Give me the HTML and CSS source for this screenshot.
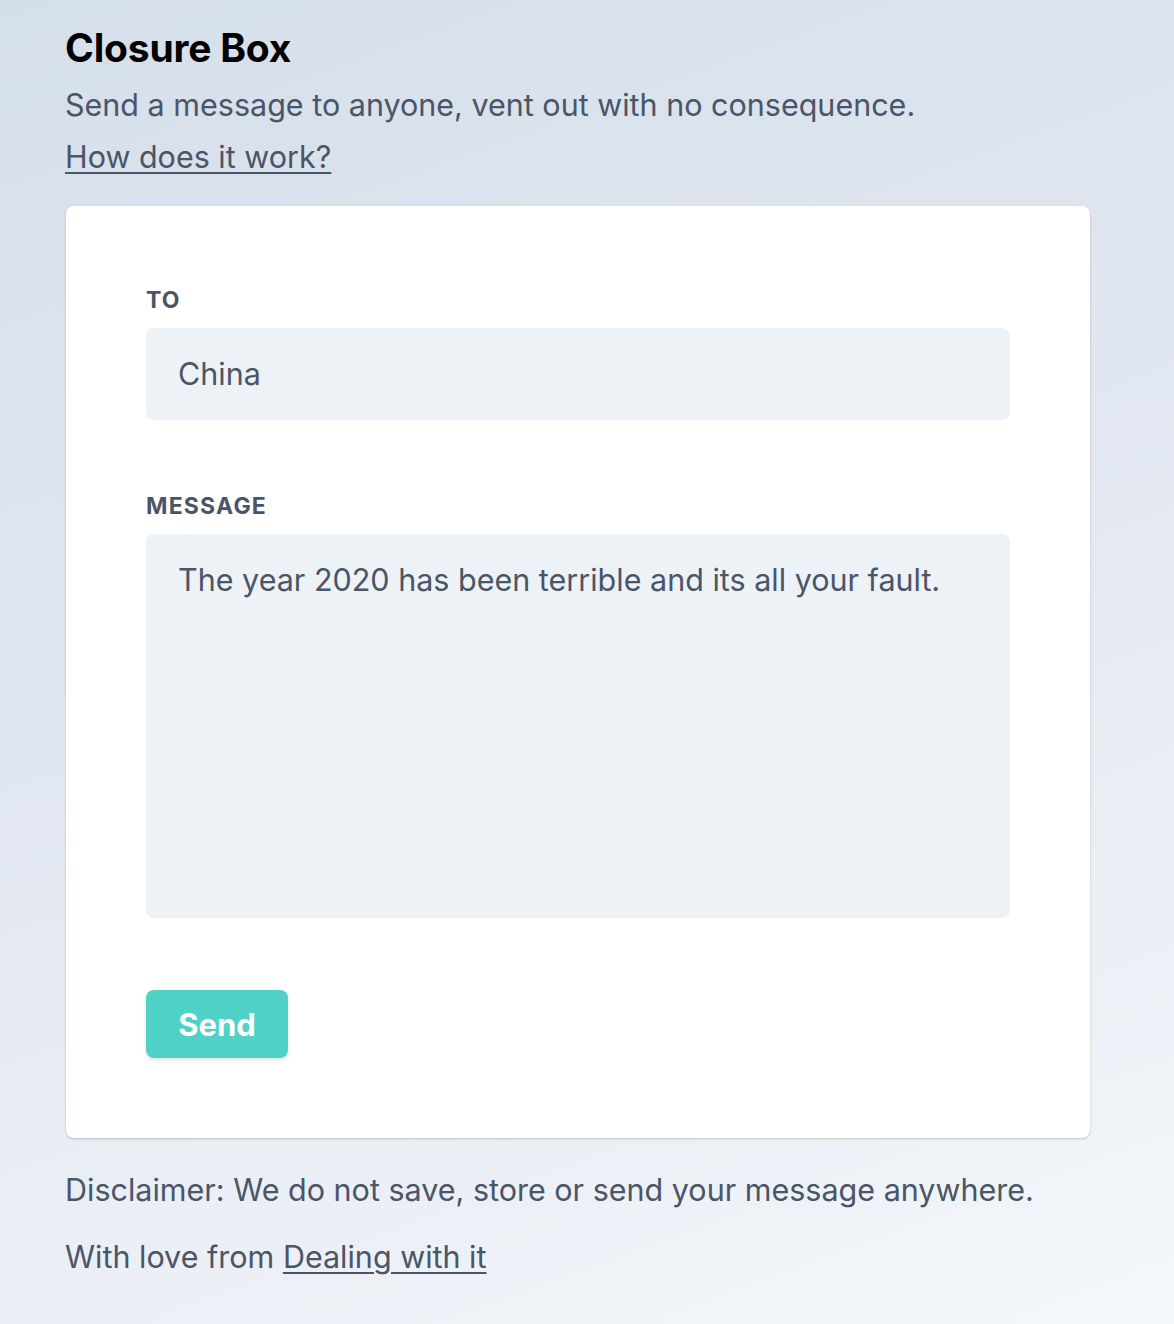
FILE: index.html
```html
<!DOCTYPE html>
<html lang="en">
<head>
<meta charset="utf-8">
<title>Closure Box</title>
<link rel="stylesheet" href="styles.css">
</head>
<body>
<main class="page">
  <h1 class="title">Closure Box</h1>
  <p class="subtitle">Send a message to anyone, vent out with no consequence.</p>
  <a class="link how" href="#">How does it work?</a>
  <form class="card">
    <label class="label" for="to">To</label>
    <input class="field" id="to" type="text" value="China">
    <label class="label label-msg" for="msg">Message</label>
    <textarea class="field area" id="msg">The year 2020 has been terrible and its all your fault.</textarea>
    <button class="send" type="button">Send</button>
  </form>
  <p class="note">Disclaimer: We do not save, store or send your message anywhere.</p>
  <p class="note love">With love from <a class="link" href="#">Dealing with it</a></p>
</main>
</body>
</html>
```

FILE: styles.css
```css
* { box-sizing: border-box; }
html, body { margin: 0; padding: 0; }
body {
  min-height: 1324px;
  background: linear-gradient(160deg, #d5dfea 0%, #e4e9f2 55%, #f4f7fa 100%);
  font-family: Inter, "Noto Sans", "Liberation Sans", sans-serif;
  color: #4a5568;
}
.page {
  padding: 24px 0 0 65px;
  width: 1090px;
  display: flex;
  flex-direction: column;
  align-items: flex-start;
}
.title {
  margin: 0;
  font-size: 39px;
  line-height: 48px;
  font-weight: 700;
  color: #000;
  letter-spacing: -0.2px;
}
.subtitle {
  margin: 9px 0 0;
  font-size: 30.5px;
  line-height: 48px;
}
.link {
  color: #4a5568;
  text-decoration: underline;
  text-decoration-thickness: 2px;
  text-underline-offset: 4px;
}
.how {
  margin-top: 4px;
  font-size: 30.5px;
  line-height: 48px;
}
.card {
  margin-top: 25px;
  margin-left: 1px;
  width: 1024px;
  background: #fff;
  border-radius: 8px;
  box-shadow: 0 1px 3px rgba(0,0,0,0.12), 0 1px 2px rgba(0,0,0,0.08);
  padding: 78px 80px 80px;
  display: flex;
  flex-direction: column;
  align-items: flex-start;
}
.label {
  font-size: 23px;
  line-height: 32px;
  font-weight: 700;
  text-transform: uppercase;
  letter-spacing: 1.2px;
  margin-bottom: 12px;
}
.label-msg { margin-top: 70px; }
.field {
  width: 864px;
  border: none;
  outline: none;
  background: #edf2f7;
  border-radius: 8px;
  font: inherit;
  font-size: 30.5px;
  line-height: 48px;
  color: #4a5568;
  padding: 22px 32px;
  margin: 0;
}
.area {
  height: 384px;
  padding: 22px 32px;
  resize: none;
  display: block;
}
.send {
  margin-top: 72px;
  width: 142px;
  height: 68px;
  border: none;
  border-radius: 8px;
  background: #4fd1c5;
  color: #fff;
  font: inherit;
  font-size: 31px;
  font-weight: 700;
  box-shadow: 0 2px 4px rgba(0,0,0,0.12);
  padding: 0;
}
.note {
  margin: 28px 0 0;
  font-size: 30.5px;
  line-height: 48px;
}
.love { margin-top: 19px; }
```
